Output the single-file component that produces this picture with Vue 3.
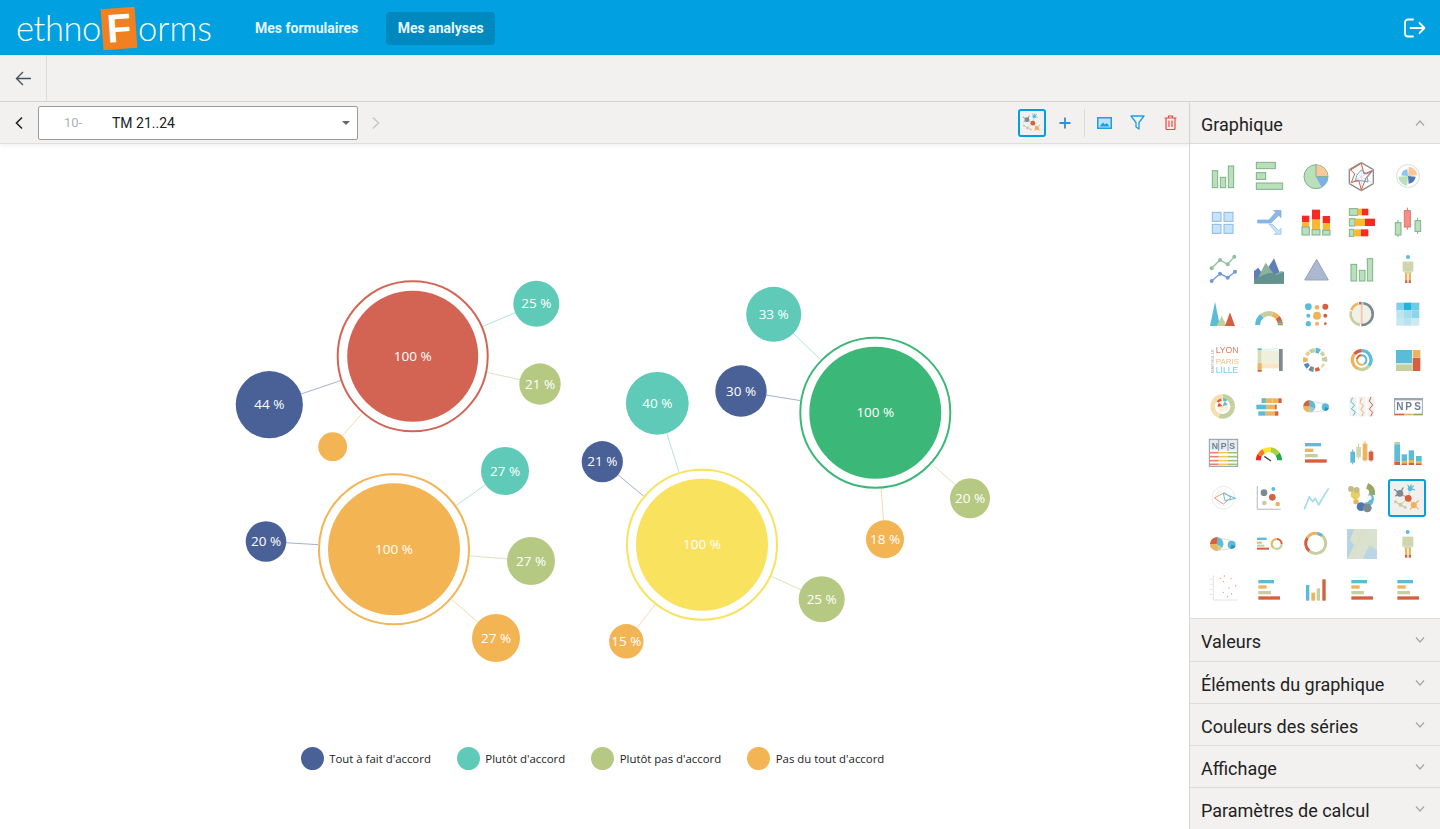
<script setup>
const accordions = ['Valeurs', 'Éléments du graphique', 'Couleurs des séries', 'Affichage', 'Paramètres de calcul']

const legend = [
  { label: "Tout à fait d'accord", color: '#4a6198' },
  { label: "Plutôt d'accord", color: '#5fcab7' },
  { label: "Plutôt pas d'accord", color: '#b6c983' },
  { label: "Pas du tout d'accord", color: '#f3b454' },
]

const BLUE = '#4a6198', TEAL = '#5fcab7', SAGE = '#b6c983', ORANGE = '#f3b454'

// each group: main bubble + its satellites
const groups = [
  { x: 412.7, y: 356.3, r: 65.5, color: '#d36453', sats: [
    { x: 536.3, y: 303.7, r: 23, color: TEAL, label: '25 %' },
    { x: 540, y: 384, r: 20.7, color: SAGE, label: '21 %' },
    { x: 269.3, y: 404.7, r: 33.6, color: BLUE, label: '44 %' },
    { x: 332.7, y: 446.7, r: 14.4, color: ORANGE, label: '' },
  ] },
  { x: 394, y: 549.3, r: 66, color: '#f3b454', sats: [
    { x: 505, y: 471, r: 24, color: TEAL, label: '27 %' },
    { x: 531, y: 561, r: 24, color: SAGE, label: '27 %' },
    { x: 496, y: 638, r: 24, color: ORANGE, label: '27 %' },
    { x: 266, y: 541.5, r: 20.3, color: BLUE, label: '20 %' },
  ] },
  { x: 702, y: 544.7, r: 66, color: '#f8e25e', sats: [
    { x: 657.3, y: 403.3, r: 31.4, color: TEAL, label: '40 %' },
    { x: 602.3, y: 461.7, r: 20.6, color: BLUE, label: '21 %' },
    { x: 821.7, y: 599.3, r: 23, color: SAGE, label: '25 %' },
    { x: 626.3, y: 641.3, r: 17.2, color: ORANGE, label: '15 %' },
  ] },
  { x: 875.3, y: 412.7, r: 66, color: '#3bb878', sats: [
    { x: 773.7, y: 314.3, r: 27.5, color: TEAL, label: '33 %' },
    { x: 741, y: 391, r: 25.7, color: BLUE, label: '30 %' },
    { x: 970, y: 498.3, r: 20, color: SAGE, label: '20 %' },
    { x: 885, y: 539.3, r: 19, color: ORANGE, label: '18 %' },
  ] },
]

function linkEnd(g, s) {
  const dx = s.x - g.x, dy = s.y - g.y
  const d = Math.hypot(dx, dy)
  return { x1: g.x + dx / d * 76, y1: g.y + dy / d * 76, x2: s.x, y2: s.y }
}

// small svg helpers for the chart type icons (coords are 3x pixels)
const gF = '#b9dfbb', gS = '#7fb08a', bl = '#5bbcd9', or = '#eeb35f', sg = '#c5cf9f', rd = '#d4603f', gy = '#7d8a90'
const R = (x1, y1, x2, y2, f, s) => `<rect x="${x1}" y="${y1}" width="${x2 - x1}" height="${y2 - y1}" fill="${f}"${s ? ` stroke="${s}" stroke-width="3"` : ''}/>`
const C = (x, y, r, f, s, w = 3) => `<circle cx="${x}" cy="${y}" r="${r}" fill="${f}"${s ? ` stroke="${s}" stroke-width="${w}"` : ''}/>`
const P = (pts, f, s, w = 3) => `<polyline points="${pts}" fill="${f}" stroke="${s || 'none'}" stroke-width="${w}" stroke-linejoin="round"/>`
const L = (x1, y1, x2, y2, s, w = 3) => `<line x1="${x1}" y1="${y1}" x2="${x2}" y2="${y2}" stroke="${s}" stroke-width="${w}"/>`
const pt = (x, y, r, a) => [(x + r * Math.cos(a * Math.PI / 180)).toFixed(1), (y + r * Math.sin(a * Math.PI / 180)).toFixed(1)].join(' ')
const A = (x, y, r, a0, a1, s, w) => `<path d="M${pt(x, y, r, a0)} A${r} ${r} 0 ${a1 - a0 > 180 ? 1 : 0} 1 ${pt(x, y, r, a1)}" fill="none" stroke="${s}" stroke-width="${w}"/>`
const W = (x, y, r, a0, a1, f) => `<path d="M${x} ${y} L${pt(x, y, r, a0)} A${r} ${r} 0 ${a1 - a0 > 180 ? 1 : 0} 1 ${pt(x, y, r, a1)}Z" fill="${f}"/>`
const T = (x, y, t, size, f, extra = '') => `<text x="${x}" y="${y}" font-size="${size}" fill="${f}" font-family="Liberation Sans, sans-serif" ${extra}>${t}</text>`

const hbars = (x, a, b, c, d, ys) => R(x, ys, x + a, ys + 10, bl) + R(x, ys + 16, x + b, ys + 26, or) + R(x, ys + 33, x + c, ys + 43, sg) + R(x, ys + 49, x + d, ys + 59, rd)

const networkIcon =
  [[615, 191, 596, 178], [615, 191, 600, 200], [615, 191, 626, 172], [648, 176, 640, 163], [648, 176, 660, 166], [648, 176, 664, 180], [648, 176, 652, 162]]
    .map(l => L(l[0], l[1], l[2], l[3], l[0] === 615 ? gy : bl, 4)).join('') +
  L(642, 207, 615, 191, '#c9a9a0', 4) + L(642, 207, 648, 176, '#b9d8e3', 4) + L(642, 207, 617, 228, '#d6dcbd', 4) + L(642, 207, 660, 229, '#f0cd9b', 4) +
  L(617, 228, 601, 218, sg, 4) + L(617, 228, 632, 236, sg, 4) +
  C(615, 191, 11, gy) + C(648, 176, 8, bl) + C(617, 228, 7, sg) + C(601, 218, 5, sg) + C(632, 236, 5, sg) + C(660, 229, 10, or) +
  L(660, 229, 676, 214, or, 4) + L(660, 229, 676, 242, or, 4) + L(660, 229, 648, 243, or, 4) + C(642, 207, 11, rd)

const iconRows = [
  [
    R(52, 62, 68, 113, gF, gS) + R(76, 82, 92, 113, gF, gS) + R(100, 48, 116, 113, gF, gS),
    R(184, 37, 241, 56, gF, gS) + R(184, 68, 212, 88, gF, gS) + R(184, 99, 263, 118, gF, gS),
    C(360, 80, 36, gF, gS) + W(360, 80, 35, -90, 0, '#fbc79b') + W(360, 80, 35, 0, 62, '#7db0e8') + L(360, 80, 360, 44, gS) + L(360, 80, 396, 80, gS),
    P('496,38 532,59 532,101 496,122 460,101 460,59 496,38', 'none', '#8d8d8d', 4) + L(496, 38, 496, 122, '#c9d6e2', 2) + L(460, 59, 532, 101, '#c9d6e2', 2) + L(532, 59, 460, 101, '#c9d6e2', 2) + P('496,60 512,72 530,62 514,82 516,96 496,92 478,94 482,76 496,60', 'none', '#55a5ea', 3) + P('496,40 504,72 528,62 510,84 496,120 488,90 466,98 476,72 464,60 496,40', 'none', rd, 3),
    C(636, 78, 34, '#fff', '#e4e4e4', 4) + W(636, 78, 28, -85, -5, '#fbc79b') + W(636, 78, 23, 5, 85, '#4c78b8') + W(636, 78, 29, 95, 175, '#b9dfbb') + W(636, 78, 20, 185, 265, '#8fc4ee'),
  ],
  [
    R(52, 186, 78, 213, '#c5e3fb', '#8ab8e8') + R(87, 186, 114, 213, '#c5e3fb', '#8ab8e8') + R(52, 222, 78, 249, '#c5e3fb', '#8ab8e8') + R(87, 222, 114, 249, '#c5e3fb', '#8ab8e8'),
    P('188,209 222,209 242,186 236,180 258,180 258,202 251,195 228,218 188,218 188,209', '#8ab8e8', '#7aa6dc', 2) + P('222,222 232,222 251,241 258,234 258,252 238,252 244,246 222,222', '#c5e3fb', '#8ab8e8', 2),
    R(318, 196, 340, 216, '#fb2a20') + R(318, 216, 340, 230, '#fdb92e') + R(318, 230, 340, 254, gF, gS) + R(348, 178, 372, 208, '#fb2a20') + R(348, 208, 372, 238, '#fdb92e') + R(348, 238, 372, 254, gF, gS) + R(380, 197, 402, 218, '#fb2a20') + R(380, 218, 402, 240, '#fdb92e') + R(380, 240, 402, 254, gF, gS),
    R(460, 175, 485, 195, gF, gS) + R(485, 175, 498, 195, '#fdb92e') + R(498, 175, 517, 195, '#fb2a20') + R(460, 205, 477, 227, gF, gS) + R(477, 205, 507, 227, '#fdb92e') + R(507, 205, 537, 227, '#fb2a20') + R(460, 237, 473, 258, gF, gS) + R(473, 237, 495, 258, '#fdb92e') + R(495, 237, 517, 258, '#fb2a20'),
    L(606, 208, 606, 260, gS) + R(598, 217, 615, 254, gF, gS) + L(634, 172, 634, 238, '#d9766c') + R(625, 181, 643, 230, '#f59089', '#d9766c') + L(665, 202, 665, 251, gS) + R(657, 211, 674, 243, gF, gS),
  ],
  [
    P('50,352 75,327 98,340 118,317', 'none', '#8fc09a', 4) + C(50, 352, 6, '#8fc09a') + C(75, 327, 6, '#8fc09a') + C(98, 340, 6, '#8fc09a') + C(118, 317, 6, '#8fc09a') + P('50,390 75,368 98,380 120,362', 'none', '#6f9bd8', 4) + C(50, 390, 6, '#6f9bd8') + C(75, 368, 6, '#6f9bd8') + C(98, 380, 6, '#6f9bd8') + C(120, 362, 6, '#6f9bd8'),
    P('177,398 177,360 190,350 205,372 237,322 258,375 237,398', '#5c7fb8') + P('177,398 190,378 212,335 238,372 258,360 267,362 267,398', '#8fb0a0') + P('177,398 177,385 205,372 225,365 245,372 267,362 267,398', '#62938e'),
    P('362,325 397,387 326,387 362,325', '#aab8d0', '#96a5bd'),
    R(465, 340, 482, 390, gF, gS) + R(490, 358, 507, 390, gF, gS) + R(514, 323, 530, 390, gF, gS),
    C(636, 318, 6, bl) + R(620, 332, 652, 362, '#cfd5ae') + R(625, 362, 647, 366, '#cfd5ae') + R(627, 366, 634, 388, or) + R(638, 366, 645, 388, or) + R(627, 388, 634, 396, rd) + R(638, 388, 645, 396, rd),
  ],
  [
    P('60,20 45,93 75,93', bl) + P('80,62 65,93 95,93', sg) + P('105,52 90,93 120,93', rd),
    A(222, 90, 34, 180, 232, bl, 15) + A(222, 90, 34, 232, 288, sg, 15) + A(222, 90, 34, 288, 320, or, 15) + A(222, 90, 34, 320, 342, rd, 15) + A(222, 90, 34, 342, 352, gy, 15) + A(222, 90, 34, 352, 362, '#94a84f', 15),
    C(337, 35, 10, bl) + C(363, 37, 7, or) + C(388, 35, 9, rd) + C(337, 62, 6, bl) + C(363, 62, 12, or) + C(388, 62, 6, rd) + C(337, 86, 8, bl) + C(363, 86, 6, or) + C(388, 86, 4, rd),
    C(497, 57, 30, '#f3f0e6') + L(497, 27, 497, 87, '#f3c9bd', 6) + A(497, 57, 33, -78, 92, gy, 8) + A(497, 57, 33, 98, 195, sg, 8) + A(497, 57, 33, 200, 252, or, 8) + A(497, 57, 33, 256, 270, rd, 8) + A(497, 57, 33, 274, 285, bl, 8),
    R(601, 23, 624, 46, '#7fd0e8') + R(624, 23, 647, 46, '#1fb4de') + R(647, 23, 670, 46, '#6fcbe5') + R(601, 46, 624, 69, '#bde5f0') + R(624, 46, 647, 69, '#a4ddee') + R(647, 46, 670, 69, '#8bd5ea') + R(601, 69, 624, 92, '#c5e8f2') + R(624, 69, 647, 92, '#b8e3ef') + R(647, 69, 670, 92, '#cbeaf3'),
  ],
  [
    T(57, 235, 'MARSEILLE', 13, '#a9a9a9', 'transform="rotate(-90 57 235)"') + T(62, 175, 'LYON', 26, '#dd7d63') + T(62, 206, 'PARIS', 24, '#f0c27e') + T(62, 235, 'LILLE', 26, '#76cbe6'),
    R(188, 163, 200, 230, '#d8dcb6') + R(252, 162, 263, 228, gy) + R(200, 166, 252, 205, '#eff0dc') + R(200, 205, 252, 220, '#fae6c4') + R(188, 205, 200, 222, or) + R(188, 160, 200, 165, bl) + R(188, 224, 200, 230, rd) + L(200, 165, 252, 160, '#bfe5f0', 2),
    [[-90, bl, 16], [-125, sg, 11], [-55, '#cdd2a6', 11], [-20, sg, 16], [20, '#e9d8a8', 8], [60, rd, 11], [95, gy, 14], [130, '#5a86bd', 14], [165, or, 14], [205, '#e8cf95', 11], [240, sg, 11]].map(p => A(357, 195, 29, p[0] + 3, p[0] + 29, p[1], p[2])).join(''),
    A(497, 195, 28, -90, 40, bl, 10) + A(497, 195, 28, 40, 110, sg, 10) + A(497, 195, 28, 110, 220, or, 10) + A(497, 195, 28, 220, 270, rd, 10) + A(497, 195, 14, -90, 60, bl, 6) + A(497, 195, 14, 60, 190, or, 6) + A(497, 195, 14, 190, 270, rd, 6),
    R(600, 165, 648, 205, '#5bbcd9') + R(650, 165, 673, 187, '#eeb35f') + R(650, 188, 673, 228, rd) + R(600, 208, 648, 228, sg),
  ],
  [
    A(83, 332, 30, -90, 0, sg, 14) + A(83, 332, 30, 0, 110, sg, 14) + A(83, 332, 30, 110, 270, '#f5dfae', 14) + W(83, 332, 24, -88, -55, bl) + W(83, 332, 24, -140, -100, rd) + C(83, 332, 17, '#f9f2dd') + W(83, 332, 15, 175, 225, rd) + W(83, 332, 15, -70, -20, bl),
    R(200, 308, 232, 322, or) + R(232, 308, 250, 322, or) + R(200, 308, 212, 322, bl) + R(250, 308, 260, 322, rd) + R(184, 327, 215, 341, bl) + R(215, 327, 240, 341, or) + R(240, 327, 245, 341, rd) + R(190, 347, 212, 360, bl) + R(212, 347, 240, 360, or) + R(240, 347, 250, 360, rd),
    L(340, 316, 388, 324, '#ccc', 2) + L(340, 350, 388, 345, '#ccc', 2) + C(340, 332, 18, sg) + W(340, 332, 18, -90, 20, bl) + W(340, 332, 18, 180, 270, rd) + W(340, 332, 18, 20, 70, '#9ac7d6') + W(340, 332, 18, 100, 180, or) + C(388, 334, 11, bl) + W(388, 334, 11, 20, 110, '#2a93bb'),
    R(460, 303, 482, 362, '#f2f2f2') + R(487, 303, 509, 362, '#f2f2f2') + R(514, 303, 535, 362, '#f2f2f2') + P('470,306 464,318 476,328 466,340 478,348 472,360', 'none', bl) + P('497,306 492,320 502,330 495,342 503,350 497,362', 'none', or) + P('525,304 520,316 530,328 520,340 530,350 524,362', 'none', rd),
    R(595, 307, 680, 314, '#9aa5ad') + T(601, 344, 'N', 30, '#6d7f92', 'font-weight="bold"') + T(628, 344, 'P', 30, '#6d7f92', 'font-weight="bold"') + T(655, 344, 'S', 30, '#6d7f92', 'font-weight="bold"') + R(595, 354, 624, 359, rd) + R(624, 354, 652, 359, or) + R(652, 354, 680, 359, '#8fa75a') + L(596, 307, 596, 359, '#9aa5ad') + L(679, 307, 679, 359, '#9aa5ad'),
  ],
  [
    R(43, 25, 128, 106, '#fff', '#8c9aa5') + R(45, 27, 126, 58, '#e4e9ee') + T(50, 54, 'N', 26, '#6d7f92', 'font-weight="bold"') + T(77, 54, 'P', 26, '#6d7f92', 'font-weight="bold"') + T(103, 54, 'S', 26, '#6d7f92', 'font-weight="bold"') + L(71, 25, 71, 60, '#8c9aa5') + L(99, 25, 99, 60, '#8c9aa5') + [65, 77, 89, 100].map(y => L(45, y, 71, y, '#ee7e6f', 5) + L(71, y, 99, y, '#fbc74c', 5) + L(99, y, 126, y, '#9bc476', 5)).join(''),
    A(222, 88, 32, 180, 208, '#f3281c', 15) + A(222, 88, 32, 208, 240, '#fb7a20', 15) + A(222, 88, 32, 240, 280, '#fde52a', 15) + A(222, 88, 32, 280, 325, '#a7d338', 15) + A(222, 88, 32, 325, 360, '#23a94a', 15) + L(208, 76, 228, 90, '#444', 4),
    R(327, 36, 375, 46, bl) + R(327, 53, 352, 63, or) + R(327, 69, 365, 79, sg) + R(327, 85, 392, 95, rd),
    L(470, 55, 470, 100, bl) + R(463, 62, 477, 95, bl) + L(488, 38, 488, 85, sg) + R(481, 48, 495, 78, '#d0d6ae') + L(507, 30, 507, 92, or) + R(500, 38, 514, 88, or) + L(525, 58, 525, 92, rd) + R(518, 62, 532, 88, rd),
    R(595, 33, 612, 40, sg) + R(595, 40, 612, 92, bl) + R(595, 92, 612, 102, rd) + R(617, 70, 633, 90, bl) + R(617, 90, 633, 97, or) + R(617, 97, 633, 102, rd) + R(638, 58, 654, 87, bl) + R(638, 87, 654, 96, or) + R(638, 96, 654, 102, rd) + R(660, 75, 677, 92, bl) + R(660, 92, 677, 97, or) + R(660, 97, 677, 102, rd),
  ],
  [
    C(85, 203, 34, '#fff', '#e8e8e8', 3) + C(85, 203, 24, '#fff', '#eee', 2) + P('58,204 88,188 108,203 85,222 58,204', 'none', '#e59a7f') + P('85,190 122,205 90,212 85,190', 'none', '#5fc0dc'),
    L(187, 168, 187, 238, '#c9c9c9', 4) + L(187, 238, 257, 238, '#c9c9c9', 4) + C(207, 188, 10, gy) + C(235, 177, 6, bl) + C(232, 202, 10, rd) + C(208, 219, 7, sg) + C(248, 222, 7, or),
    P('325,238 340,200 350,215 358,205 368,225 385,195 398,175', 'none', '#a6dbe9', 5),
    A(510, 207, 17, -60, 110, bl, 14) + A(505, 190, 24, -70, 10, '#9aa463', 18) + C(478, 194, 14, '#e3d25e') + C(465, 177, 9, '#c8b98d') + C(482, 180, 9, '#c9bb85') + C(480, 215, 8, or) + C(495, 230, 13, '#4f76ae') + C(514, 234, 13, gy) + C(520, 203, 7, '#f5f5f5'),
    '__selected__',
  ],
  [
    L(65, 323, 110, 332, '#ccc', 2) + L(65, 362, 110, 356, '#ccc', 2) + C(65, 342, 20, sg) + W(65, 342, 20, -80, 30, bl) + W(65, 342, 20, 180, 280, rd) + W(65, 342, 20, 80, 180, or) + C(110, 344, 12, bl) + W(110, 344, 12, 20, 110, '#2a93bb'),
    R(186, 323, 215, 330, bl) + R(186, 335, 200, 341, or) + R(186, 344, 208, 350, sg) + R(186, 353, 222, 359, rd) + A(245, 342, 15, -90, 0, rd, 6) + A(245, 342, 15, 0, 130, sg, 6) + A(245, 342, 15, 130, 270, or, 6),
    A(359, 340, 30, -80, 130, sg, 9) + A(359, 340, 30, 130, 215, rd, 9) + A(359, 340, 30, 215, 280, or, 9) + A(359, 340, 30, 280, 310, bl, 9),
    R(453, 297, 543, 387, '#d9e2cf') + P('453,297 475,297 462,330 475,345 453,387', '#b9d3e4') + P('520,345 543,360 543,387 500,387', '#bcd5e6') + L(480, 310, 530, 360, '#ead8b8', 2) + L(500, 300, 470, 380, '#e2d4b4', 2),
    C(635, 306, 6, bl) + R(619, 320, 652, 350, '#cfd5ae') + R(624, 350, 647, 354, '#cfd5ae') + R(627, 354, 634, 375, or) + R(638, 354, 645, 375, or) + R(627, 375, 634, 383, rd) + R(638, 375, 645, 383, rd),
  ],
  [
    L(55, 436, 55, 510, '#d4d4d4', 2) + L(55, 510, 128, 510, '#d4d4d4', 2) + [[76, 445], [88, 438], [108, 445], [85, 455], [122, 468], [102, 474], [85, 487], [110, 492], [98, 500]].map(p => C(p[0], p[1], 2, '#ec8a78')).join('') + [448, 463, 478, 493].map(y => L(44, y, 52, y, '#d4d4d4', 2)).join(''),
    hbars(190, 47, 25, 38, 65, 450),
    R(330, 465, 340, 512, bl) + R(346, 488, 357, 512, or) + R(362, 475, 372, 512, sg) + R(379, 448, 389, 512, rd),
    hbars(466, 47, 25, 38, 65, 450),
    hbars(604, 47, 25, 38, 65, 450),
  ],
]

// centre of each row, in the same 3x coordinates as the shapes
const rowCy = [81, 218, 354, 57, 195, 331, 63, 201, 339, 477]
const colCx = [81, 219, 357, 495, 633]

const icons = iconRows.flatMap((row, r) => row.map((body, c) => {
  const selected = body === '__selected__'
  return {
    id: `${r}-${c}`,
    selected,
    body: selected ? networkIcon : body,
    view: selected ? '583 151 110 110' : `${colCx[c] - 69} ${rowCy[r] - 69} 138 138`,
  }
}))
</script>

<template>
  <div class="page">
    <header class="topbar">
      <div class="logo">
        <span class="logo-left">ethno</span>
        <span class="logo-f">F</span>
        <span>orms</span>
      </div>
      <nav class="nav">
        <a class="nav-link">Mes formulaires</a>
        <a class="nav-link active">Mes analyses</a>
      </nav>
      <svg class="logout" width="22" height="20" viewBox="0 0 22 20" fill="none" stroke="#fff" stroke-width="1.8" stroke-linecap="round" stroke-linejoin="round">
        <path d="M9 1.5H4a3 3 0 0 0-3 3v11a3 3 0 0 0 3 3h5"/>
        <path d="M6.5 10H20M15.5 5l5 5-5 5"/>
      </svg>
    </header>

    <div class="actionbar">
      <button class="back-btn">
        <svg width="16" height="15" viewBox="0 0 16 15" fill="none" stroke="#44545f" stroke-width="1.4">
          <path d="M16 7.5H1.5M8 1 1.5 7.5 8 14"/>
        </svg>
      </button>
    </div>

    <div class="main">
      <section class="content">
        <div class="subbar">
          <svg class="chev-left" width="10" height="14" viewBox="0 0 10 14" fill="none" stroke="#222" stroke-width="1.6"><path d="M8 1.5 2.5 7 8 12.5"/></svg>
          <div class="select">
            <span class="select-num">10-</span>
            <span class="select-text">TM 21..24</span>
            <span class="caret"></span>
          </div>
          <svg class="chev-right" width="10" height="14" viewBox="0 0 10 14" fill="none" stroke="#c9c9c9" stroke-width="1.6"><path d="M2 1.5 7.5 7 2 12.5"/></svg>

          <div class="tools">
            <div class="tool-chart">
              <svg class="blurred" width="24" height="24" viewBox="583 151 110 110" v-html="networkIcon"></svg>
            </div>
            <svg class="tool-plus" width="12" height="12" viewBox="0 0 12 12" stroke="#2d8fd5" stroke-width="1.8"><path d="M6 .5v11M.5 6h11"/></svg>
            <span class="tool-sep"></span>
            <svg class="tool-img" width="15" height="12" viewBox="0 0 15 12">
              <rect x=".75" y=".75" width="13.5" height="10.5" fill="#bde3f7" stroke="#1f9fe0" stroke-width="1.5"/>
              <path d="M2.5 9.5 6 5.5l2 2 2-1.5 2.5 3.5z" fill="#1f9fe0"/>
            </svg>
            <svg class="tool-filter" width="15" height="15" viewBox="0 0 15 15" fill="none" stroke="#1f9fe0" stroke-width="1.3" stroke-linejoin="round">
              <path d="M1 1h13L9 7.5V14l-3-2V7.5z"/>
            </svg>
            <svg class="tool-trash" width="13" height="15" viewBox="0 0 13 15" fill="none" stroke="#f0473f" stroke-width="1.2">
              <path d="M.5 3h12M4.5 3V1h4v2M2 3v10.5a1 1 0 0 0 1 1h7a1 1 0 0 0 1-1V3M5 5.5v6.5M8 5.5v6.5"/>
            </svg>
          </div>
        </div>

        <div class="chart-area">
          <svg class="bubbles" width="1189" height="600" viewBox="0 144 1189 600">
            <g v-for="(g, i) in groups" :key="i">
              <line
                v-for="(s, j) in g.sats"
                :key="j"
                v-bind="linkEnd(g, s)"
                :stroke="s.color"
                stroke-opacity="0.5"
              />
              <circle :cx="g.x" :cy="g.y" r="75" fill="#fff" :stroke="g.color" stroke-width="2"/>
              <circle :cx="g.x" :cy="g.y" :r="g.r" :fill="g.color"/>
              <text :x="g.x" :y="g.y" class="bubble-label" dy=".35em">100 %</text>
              <g v-for="(s, j) in g.sats" :key="j">
                <circle :cx="s.x" :cy="s.y" :r="s.r" :fill="s.color"/>
                <text :x="s.x" :y="s.y" class="bubble-label" dy=".35em">{{ s.label }}</text>
              </g>
            </g>
          </svg>
          <div class="legend">
            <div v-for="item in legend" :key="item.label" class="legend-item">
              <span class="legend-dot" :style="{ background: item.color }"></span>
              <span>{{ item.label }}</span>
            </div>
          </div>
        </div>
      </section>

      <aside class="panel">
        <div class="panel-head open">
          <span>Graphique</span>
          <svg width="10" height="6" viewBox="0 0 10 6" fill="none" stroke="#a6a6a6" stroke-width="1.2"><path d="M1 5.5 5 1l4 4.5"/></svg>
        </div>
        <div class="icon-grid">
          <div v-for="ic in icons" :key="ic.id" class="icon-cell" :class="{ selected: ic.selected }">
            <svg class="blurred" :width="ic.selected ? 34 : 46" :height="ic.selected ? 34 : 46" :viewBox="ic.view" v-html="ic.body"></svg>
          </div>
        </div>
        <div v-for="name in accordions" :key="name" class="panel-head">
          <span>{{ name }}</span>
          <svg width="10" height="6" viewBox="0 0 10 6" fill="none" stroke="#a6a6a6" stroke-width="1.2"><path d="M1 .5 5 5l4-4.5"/></svg>
        </div>
      </aside>
    </div>
  </div>
</template>

<style>
html, body { margin: 0; overflow: hidden; }
</style>

<style scoped>
.page {
  width: 1440px;
  height: 829px;
  display: flex;
  flex-direction: column;
  overflow: hidden;
  font-family: Roboto, sans-serif;
  color: #222;
  background: #fff;
}

.topbar {
  height: 55px;
  flex-shrink: 0;
  background: #00a0e1;
  display: flex;
  align-items: center;
  padding: 0 14px 0 16px;
}
.logo {
  width: 227px;
  flex-shrink: 0;
  display: flex;
  align-items: center;
  font-family: Lato, sans-serif;
  font-weight: 300;
  font-size: 34.5px;
  color: #fff;
}
.logo-left {
  letter-spacing: -0.4px;
}
.logo-f {
  width: 34px;
  height: 41px;
  margin: 2px 2px 0 1px;
  background: #f08020;
  transform: rotate(-4deg);
  display: flex;
  align-items: center;
  justify-content: center;
  font-family: "Liberation Sans", sans-serif;
  font-weight: 700;
  font-size: 40px;
}
.nav {
  display: flex;
  align-items: center;
  gap: 16px;
  margin-top: 2px;
}
.nav-link {
  font-size: 14px;
  font-weight: 700;
  color: #e6f6fd;
  height: 33px;
  box-sizing: border-box;
  line-height: 33px;
  padding: 0 12px;
  border-radius: 4px;
}
.nav-link.active {
  background: #0089bf;
  padding: 0 11.5px;
}
.logout {
  margin-left: auto;
}

.actionbar {
  height: 46px;
  flex-shrink: 0;
  background: #f2f1ef;
  border-bottom: 1px solid #d4d4d4;
}
.back-btn {
  width: 47px;
  height: 46px;
  padding: 0;
  background: none;
  border: none;
  border-right: 1px solid #dcdcdc;
  display: flex;
  align-items: center;
  justify-content: center;
}

.main {
  flex: 1;
  min-height: 0;
  display: flex;
}
.content {
  width: 1189px;
  flex-shrink: 0;
  display: flex;
  flex-direction: column;
}
.subbar {
  height: 41px;
  flex-shrink: 0;
  background: #f2f1ef;
  border-bottom: 1px solid #dedede;
  box-shadow: 0 2px 4px rgba(0, 0, 0, 0.06);
  display: flex;
  align-items: center;
  padding-left: 14px;
  position: relative;
  z-index: 1;
}
.chev-left {
  margin-right: 14px;
}
.select {
  width: 320px;
  height: 34px;
  box-sizing: border-box;
  background: #fff;
  border: 1px solid #9a9a9a;
  border-radius: 2px;
  display: flex;
  align-items: center;
  padding-left: 25px;
  font-size: 14px;
}
.select-num {
  width: 48px;
  font-size: 13px;
  color: #a9b4b8;
}
.caret {
  margin-left: auto;
  margin-right: 7px;
  border-left: 4px solid transparent;
  border-right: 4px solid transparent;
  border-top: 4px solid #666;
}
.chev-right {
  margin-left: 13px;
}
.tools {
  margin-left: auto;
  display: flex;
  align-items: center;
  padding-right: 12px;
}
.tool-chart {
  width: 28px;
  height: 28px;
  box-sizing: border-box;
  border: 2px solid #00a0e1;
  border-radius: 3px;
  display: flex;
  align-items: center;
  justify-content: center;
}
.tool-plus {
  margin-left: 13px;
}
.tool-sep {
  width: 1px;
  height: 28px;
  background: #dcdcdc;
  margin: 0 12px 0 13px;
}
.tool-filter {
  margin-left: 18px;
}
.tool-trash {
  margin-left: 19px;
}

.chart-area {
  flex: 1;
  min-height: 0;
  display: flex;
  flex-direction: column;
}
.bubbles {
  flex-shrink: 0;
}
.bubble-label {
  font-family: "Open Sans", sans-serif;
  font-size: 13.5px;
  fill: #fff;
  text-anchor: middle;
}
.legend {
  margin-top: 3px;
  padding-right: 4px;
  display: flex;
  justify-content: center;
  gap: 26px;
  font-family: "Open Sans", sans-serif;
  font-size: 11.4px;
  color: #222;
}
.legend-item {
  display: flex;
  align-items: center;
  gap: 5.5px;
}
.legend-dot {
  width: 23px;
  height: 23px;
  border-radius: 50%;
}

.panel {
  flex: 1;
  border-left: 1px solid #d8d8d8;
  min-width: 0;
}
.panel-head {
  height: 41px;
  background: #f2f1ef;
  border-bottom: 1px solid #dcdcdc;
  display: flex;
  align-items: center;
  justify-content: space-between;
  padding: 0 15px 0 11px;
  font-size: 18px;
  color: #222;
}
.panel-head span {
  padding-top: 3px;
}
.icon-grid + .panel-head {
  height: 42px;
}
.icon-grid {
  height: 475px;
  box-sizing: border-box;
  border-bottom: 1px solid #dcdcdc;
  padding: 10px 0 0 9px;
  display: grid;
  grid-template-columns: repeat(5, 46.25px);
  grid-auto-rows: 45.8px;
}
.icon-cell {
  display: flex;
  align-items: center;
  justify-content: center;
}
.icon-cell.selected {
  width: 38px;
  height: 38px;
  box-sizing: border-box;
  margin: 4px;
  border: 2px solid #00a0e1;
  border-radius: 3px;
  background: #f1f0ee;
}
.blurred {
  filter: blur(0.4px);
  overflow: hidden;
}
</style>
